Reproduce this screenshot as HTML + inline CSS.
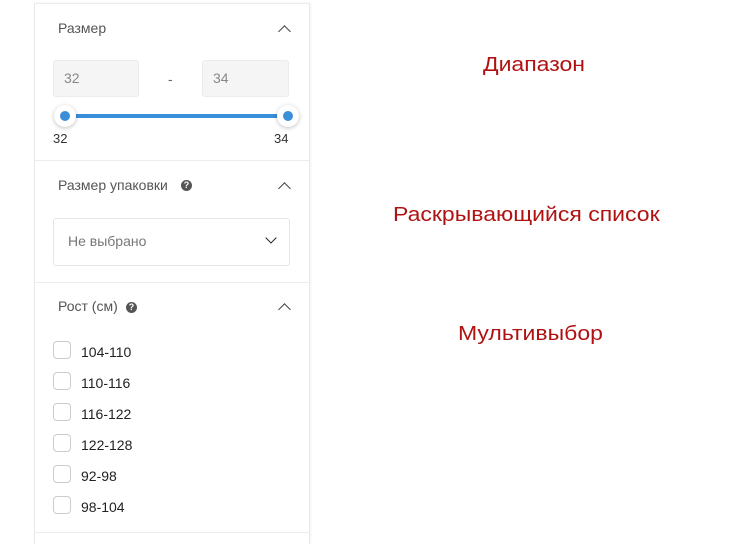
<!DOCTYPE html>
<html><head><meta charset="utf-8"><style>
body{margin:0;width:740px;height:536px;background:#fff;font-family:"Liberation Sans",sans-serif;position:relative;overflow:hidden}
.a{position:absolute}
.panel{left:34px;top:3px;width:274px;height:540px;border-left:1px solid #e8e8e8;border-right:1px solid #e8e8e8;border-top:1px solid #ececec;box-shadow:1px 0 3px rgba(0,0,0,.05)}
.sep{left:35px;width:274px;height:1px;background:#ececec}
.h{font-size:14px;color:#555}
.chev{width:8px;height:8px;border-left:1.6px solid #444;border-top:1.6px solid #444;transform:rotate(45deg)}
.inp{background:#f5f5f5;border:1px solid #ececec;border-radius:3px;height:37px;width:86px;font-size:14px;color:#888;box-sizing:border-box;padding:9px 10px}
.q{width:11px;height:11px;border-radius:50%;background:#555;color:#fff;font-size:9px;font-weight:bold;text-align:center;line-height:11px}
.cb{left:53px;width:18px;height:18px;border:1px solid #ccc;border-radius:4px;box-sizing:border-box}
.cl{left:81px;font-size:14px;color:#222}
.red{color:#b01212;font-size:20px;transform:scaleX(1.15);transform-origin:left top;white-space:nowrap}
.knob{width:22px;height:22px;border-radius:50%;background:#fff;box-shadow:0 1px 4px rgba(0,0,0,.25)}
.dot{width:10px;height:10px;border-radius:50%;background:#3a8fd9;margin:6px}
</style></head><body>
<div class="a panel"></div>
<div class="a h" style="left:58px;top:20px">Размер</div>
<div class="a chev" style="left:280px;top:27px"></div>
<div class="a inp" style="left:53px;top:60px">32</div>
<div class="a" style="left:168px;top:71px;font-size:14px;color:#666">-</div>
<div class="a inp" style="left:202px;top:60px;width:87px">34</div>
<div class="a" style="left:65px;top:114px;width:223px;height:4px;background:#3a8fd9;border-radius:2px"></div>
<div class="a knob" style="left:54px;top:105px"><div class="dot"></div></div>
<div class="a knob" style="left:277px;top:105px"><div class="dot"></div></div>
<div class="a" style="left:53px;top:131px;font-size:13px;color:#333">32</div>
<div class="a" style="left:274px;top:131px;font-size:13px;color:#333">34</div>
<div class="a sep" style="top:160px"></div>
<div class="a h" style="left:58px;top:177px">Размер упаковки</div>
<div class="a q" style="left:181px;top:180px">?</div>
<div class="a chev" style="left:280px;top:184px"></div>
<div class="a" style="left:53px;top:218px;width:237px;height:48px;border:1px solid #e5e5e5;border-radius:3px;box-sizing:border-box"></div>
<div class="a" style="left:68px;top:233px;font-size:14px;color:#777">Не выбрано</div>
<div class="a" style="left:267px;top:234px;width:7px;height:7px;border-right:1.6px solid #222;border-bottom:1.6px solid #222;transform:rotate(45deg)"></div>
<div class="a sep" style="top:282px"></div>
<div class="a h" style="left:58px;top:298px">Рост (см)</div>
<div class="a q" style="left:126px;top:302px">?</div>
<div class="a chev" style="left:280px;top:305px"></div>
<div class="a cb" style="top:341px"></div><div class="a cl" style="top:344px">104-110</div>
<div class="a cb" style="top:372px"></div><div class="a cl" style="top:375px">110-116</div>
<div class="a cb" style="top:403px"></div><div class="a cl" style="top:406px">116-122</div>
<div class="a cb" style="top:434px"></div><div class="a cl" style="top:437px">122-128</div>
<div class="a cb" style="top:465px"></div><div class="a cl" style="top:468px">92-98</div>
<div class="a cb" style="top:496px"></div><div class="a cl" style="top:499px">98-104</div>
<div class="a sep" style="top:532px"></div>
<div class="a red" style="left:483px;top:54px">Диапазон</div>
<div class="a red" style="left:393px;top:204px">Раскрывающийся список</div>
<div class="a red" style="left:458px;top:323px">Мультивыбор</div>
</body></html>
